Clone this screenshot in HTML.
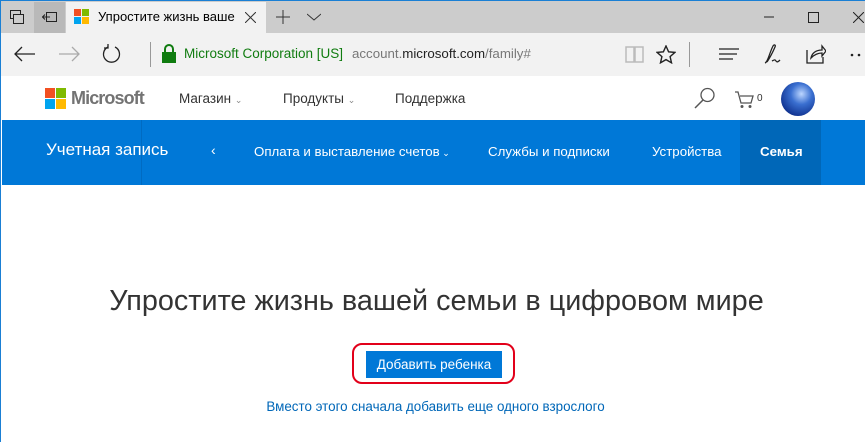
<!DOCTYPE html>
<html><head><meta charset="utf-8"><style>
*{margin:0;padding:0;box-sizing:border-box}
body{width:865px;height:442px;overflow:hidden;background:#fff;font-family:"Segoe UI","Liberation Sans","Noto Sans CJK SC",sans-serif;position:relative;border-left:1px solid #1a7fd4;border-top:1px solid #1a7fd4}
.abs{position:absolute}
.t{white-space:nowrap}
</style></head><body>
<div class="abs" style="left:0;top:0;width:865px;height:32px;background:#cccccc"></div>
<div class="abs" style="left:33px;top:1px;width:31px;height:31px;background:#b9b9b9"></div>
<div class="abs" style="left:65px;top:1px;width:200px;height:31px;background:#f2f2f2"></div>
<svg class="abs" style="left:9px;top:9px" width="14" height="14"><rect x="0.5" y="0.5" width="10" height="8" fill="none" stroke="#222"/><rect x="3.5" y="4.5" width="10" height="9" fill="#ccc" stroke="#222"/></svg>
<svg class="abs" style="left:41px;top:10px" width="16" height="12"><rect x="4.5" y="1.5" width="10" height="9" fill="none" stroke="#222"/><path d="M0 6h8M3 3.5L0.5 6 3 8.5" stroke="#222" fill="none"/></svg>
<svg class="abs" style="left:73px;top:8px" width="15" height="15"><rect x="0" y="0" width="7" height="7" fill="#f25022"/><rect x="8" y="0" width="7" height="7" fill="#7fba00"/><rect x="0" y="8" width="7" height="7" fill="#00a4ef"/><rect x="8" y="8" width="7" height="7" fill="#ffb900"/></svg>
<div class="abs t" style="left:97px;top:8px;font-size:13px;color:#000">Упростите жизнь ваше</div>
<svg class="abs" style="left:244px;top:11px" width="11" height="11"><path d="M0 0L11 11M11 0L0 11" stroke="#333"/></svg>
<svg class="abs" style="left:275px;top:9px" width="14" height="14"><path d="M7 0v14M0 7h14" stroke="#333"/></svg>
<svg class="abs" style="left:306px;top:12px" width="14" height="8"><path d="M0 1l7 6 7-6" stroke="#333" fill="none"/></svg>
<svg class="abs" style="left:763px;top:15px" width="10" height="2"><path d="M0 1h10" stroke="#222"/></svg>
<svg class="abs" style="left:807px;top:11px" width="11" height="11"><rect x="0.5" y="0.5" width="10" height="10" fill="none" stroke="#222"/></svg>
<svg class="abs" style="left:852px;top:11px" width="11" height="11"><path d="M0 0L11 11M11 0L0 11" stroke="#222"/></svg>
<div class="abs" style="left:0;top:32px;width:865px;height:43px;background:#f2f2f2"></div>
<svg class="abs" style="left:13px;top:45px" width="22" height="16"><path d="M21 8H1M8 1L1 8l7 7" stroke="#222" fill="none" stroke-width="1.3"/></svg>
<svg class="abs" style="left:57px;top:45px" width="22" height="16"><path d="M1 8h20M14 1l7 7-7 7" stroke="#aaa" fill="none" stroke-width="1.3"/></svg>
<svg class="abs" style="left:100px;top:43px" width="22" height="20"><path d="M7 3A8 8 0 1 0 14 3" stroke="#222" fill="none" stroke-width="1.3"/><path d="M7 0v4H3" stroke="#222" fill="none" stroke-width="1.3"/></svg>
<div class="abs" style="left:149px;top:41px;width:1px;height:25px;background:#999"></div>
<svg class="abs" style="left:161px;top:43px" width="14" height="19"><path d="M3 8V5a4 4 0 0 1 8 0v3" stroke="#107c10" stroke-width="2" fill="none"/><rect x="0" y="8" width="14" height="11" fill="#107c10"/></svg>
<div class="abs t" style="left:183px;top:45px;font-size:13.5px;color:#107c10">Microsoft Corporation [US]</div>
<div class="abs t" style="left:351px;top:45px;font-size:13.3px;color:#777">account.<span style="color:#222">microsoft.com</span>/family#</div>
<svg class="abs" style="left:624px;top:45px" width="20" height="17"><path d="M1 1h8v15H1zM10 1h8v15h-8z" stroke="#bbb" fill="none" stroke-width="1.5"/></svg>
<svg class="abs" style="left:655px;top:44px" width="20" height="19"><path d="M10 1l2.6 5.8 6.3.6-4.8 4.2 1.4 6.2L10 14.6 4.5 17.8l1.4-6.2L1.1 7.4l6.3-.6z" stroke="#222" fill="none" stroke-width="1.4"/></svg>
<div class="abs" style="left:688px;top:41px;width:1px;height:25px;background:#999"></div>
<svg class="abs" style="left:718px;top:47px" width="20" height="13"><path d="M0 1h20M0 6h18M0 11h14" stroke="#222" stroke-width="1.3"/></svg>
<svg class="abs" style="left:763px;top:43px" width="20" height="20"><path d="M1 19c3-1 4-9 8-17 1-2 3-1 2 1-3 7-6 12-8 15M8 17c2-1 3-2 4 0s3 0 4-1" stroke="#222" fill="none" stroke-width="1.3"/></svg>
<svg class="abs" style="left:805px;top:43px" width="20" height="20"><path d="M1 6v13h16v-6" stroke="#222" fill="none" stroke-width="1.3"/><path d="M5 14c1-5 5-8 11-8V2l4 5-4 5V9c-5 0-8 2-11 5z" stroke="#222" fill="none" stroke-width="1.3"/></svg>
<svg class="abs" style="left:849px;top:52px" width="16" height="4"><circle cx="2" cy="2" r="1.3" fill="#222"/><circle cx="9" cy="2" r="1.3" fill="#222"/></svg>
<svg class="abs" style="left:44px;top:87px" width="22" height="22"><rect x="0" y="0" width="10" height="10" fill="#f25022"/><rect x="11" y="0" width="10" height="10" fill="#7fba00"/><rect x="0" y="11" width="10" height="10" fill="#00a4ef"/><rect x="11" y="11" width="10" height="10" fill="#ffb900"/></svg>
<div class="abs t" style="left:70px;top:87px;font-size:18px;color:#737373;font-weight:bold;letter-spacing:-0.9px">Microsoft</div>
<div class="abs t" style="left:178px;top:90px;font-size:13.5px;color:#333">Магазин <span style="font-size:9px;color:#888">⌄</span></div>
<div class="abs t" style="left:282px;top:90px;font-size:13.5px;color:#333">Продукты <span style="font-size:9px;color:#888">⌄</span></div>
<div class="abs t" style="left:394px;top:90px;font-size:13.5px;color:#333">Поддержка</div>
<svg class="abs" style="left:693px;top:86px" width="22" height="22"><circle cx="13.5" cy="8" r="6.5" stroke="#555" fill="none" stroke-width="1.3"/><path d="M9 13L1 21" stroke="#555" stroke-width="1.5"/></svg>
<svg class="abs" style="left:734px;top:90px" width="20" height="18"><path d="M0 1h3l3 11h10l2-7H5" stroke="#555" fill="none" stroke-width="1.3"/><circle cx="7" cy="15.5" r="1.5" fill="#555"/><circle cx="15" cy="15.5" r="1.5" fill="#555"/></svg>
<div class="abs t" style="left:756px;top:92px;font-size:10px;color:#333">0</div>
<div class="abs" style="left:780px;top:81px;width:34px;height:34px;border-radius:50%;background:radial-gradient(circle at 60% 35%,#bcd6ff 0,#3a6fd0 35%,#0c2d8a 80%)"></div>
<div class="abs" style="left:1px;top:119px;width:864px;height:65px;background:#0078d7"></div>
<div class="abs" style="left:140px;top:119px;width:1px;height:65px;background:#006bc2"></div>
<div class="abs" style="left:739px;top:119px;width:81px;height:65px;background:#0067b8"></div>
<div class="abs t" style="left:45px;top:139px;font-size:17px;color:#fff">Учетная запись</div>
<div class="abs t" style="left:210px;top:141px;font-size:14px;color:#fff">‹</div>
<div class="abs t" style="left:253px;top:143px;font-size:13.3px;color:#fff">Оплата и выставление счетов<span style="font-size:9px"> ⌄</span></div>
<div class="abs t" style="left:487px;top:143px;font-size:13.3px;color:#fff">Службы и подписки</div>
<div class="abs t" style="left:651px;top:143px;font-size:13.3px;color:#fff">Устройства</div>
<div class="abs t" style="left:759px;top:143px;font-size:13.3px;color:#fff;font-weight:bold">Семья</div>
<div class="abs t" style="left:0;width:865px;text-align:center;top:284px;font-size:28.8px;color:#333;padding-left:6px">Упростите жизнь вашей семьи в цифровом мире</div>
<div class="abs" style="left:351px;top:342px;width:163px;height:41px;border:2.5px solid #e2001a;border-radius:10px"></div>
<div class="abs t" style="left:365px;top:350px;width:136px;height:27px;background:#0078d7;color:#fff;font-size:13.5px;text-align:center;line-height:27px">Добавить ребенка</div>
<div class="abs t" style="left:0;width:865px;text-align:center;top:398px;font-size:13.4px;color:#0067b8;padding-left:4px">Вместо этого сначала добавить еще одного взрослого</div>
</body></html>
